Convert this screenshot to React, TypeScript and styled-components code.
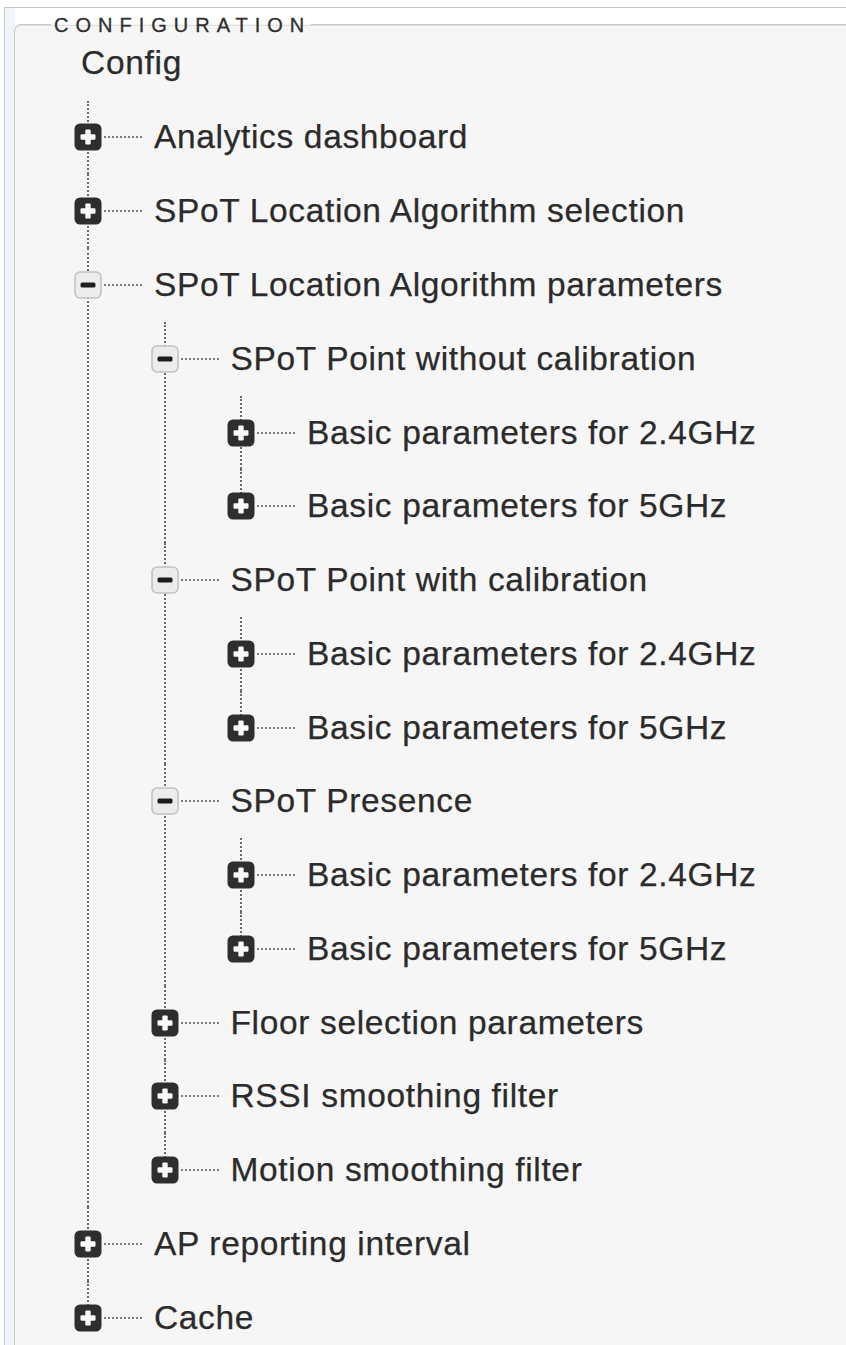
import React from "react";
import styled, { createGlobalStyle } from "styled-components";

const GlobalStyle = createGlobalStyle`
  html, body { margin: 0; padding: 0; background: #ffffff; }
  body { font-family: "Liberation Sans", Arial, sans-serif; overflow: hidden; }
`;

const ROW = 73.78;
const INDENT = 76.5;
const ICON = 28;

type Node = { label: string; children?: Node[] };

const basics = (): Node[] => [
  { label: "Basic parameters for 2.4GHz" },
  { label: "Basic parameters for 5GHz" },
];

const tree: Node[] = [
  { label: "Analytics dashboard" },
  { label: "SPoT Location Algorithm selection" },
  {
    label: "SPoT Location Algorithm parameters",
    children: [
      { label: "SPoT Point without calibration", children: basics() },
      { label: "SPoT Point with calibration", children: basics() },
      { label: "SPoT Presence", children: basics() },
      { label: "Floor selection parameters" },
      { label: "RSSI smoothing filter" },
      { label: "Motion smoothing filter" },
    ],
  },
  { label: "AP reporting interval" },
  { label: "Cache" },
];

const Frame = styled.div`
  margin: 7px 0 0 4px;
  border-top: 1px solid #c6c6c6;
  border-left: 1px solid #c6c6c6;
  padding: 7px 0 0 9px;
  background: linear-gradient(to right, #f1f5fb 0 10px, #ffffff 10px);
  min-height: 1400px;
`;

const Panel = styled.fieldset`
  margin: 0;
  padding: 0 0 40px 0;
  min-width: 0;
  border: 1px solid #c8c8c8;
  border-right: none;
  border-bottom: none;
  border-top-left-radius: 7px;
  background: #f6f6f6;
  box-shadow: inset 0 1px 0 #e0e0e0;
`;

const Legend = styled.legend`
  margin-left: 36px;
  padding: 1px 0 0 3px;
  font-family: "Liberation Sans", Arial, sans-serif;
  font-size: 20px;
  line-height: 18px;
  letter-spacing: 7px;
  color: #2e2e2e;
  -webkit-text-stroke: 0.3px #2e2e2e;
`;

const Title = styled.div`
  height: 52px;
  padding-top: 3px;
  display: flex;
  align-items: center;
  padding-left: 66px;
  font-size: 33.5px;
  letter-spacing: 0.7px;
  color: #2b2b2b;
  -webkit-text-stroke: 0.25px #2b2b2b;
`;

const List = styled.ul<{ $root?: boolean }>`
  list-style: none;
  margin: ${(p) => (p.$root ? "11.6px 0 0 59px" : `0 0 0 ${INDENT}px`)};
  padding: 0;
`;

const Item = styled.li<{ $last: boolean }>`
  position: relative;
  &::before {
    content: "";
    position: absolute;
    left: ${ICON / 2 - 1}px;
    top: 0;
    ${(p) => (p.$last ? `height: ${ROW / 2}px;` : "bottom: 0;")}
    border-left: 2px dotted #6a6a6a;
  }
`;

const Row = styled.div`
  position: relative;
  height: ${ROW}px;
  display: flex;
  align-items: center;
`;

const Toggle = styled.svg`
  position: relative;
  flex: none;
  width: ${ICON}px;
  height: ${ICON}px;
  display: block;
`;

const Connector = styled.span`
  flex: none;
  width: 38px;
  margin: 0 12px 0 2px;
  border-top: 2px dotted #7c7c7c;
`;

const Label = styled.span`
  font-size: 33.5px;
  letter-spacing: 0.65px;
  color: #2b2b2b;
  -webkit-text-stroke: 0.25px #2b2b2b;
  white-space: nowrap;
`;

const PlusIcon = () => (
  <Toggle viewBox="0 0 28 28">
    <rect x="0.5" y="0.5" width="27" height="27" rx="5.5" fill="#2e2e2e" />
    <rect x="6.5" y="11.3" width="15" height="5.4" rx="1.2" fill="#fafafa" />
    <rect x="11.3" y="6.5" width="5.4" height="15" rx="1.2" fill="#fafafa" />
  </Toggle>
);

const MinusIcon = () => (
  <Toggle viewBox="0 0 28 28">
    <rect x="1" y="1" width="26" height="26" rx="5" fill="#ececec" stroke="#c2c2c2" strokeWidth="1.6" />
    <rect x="6.5" y="11.5" width="15" height="5" rx="1.5" fill="#1c1c1c" />
  </Toggle>
);

const TreeNode = ({ node, last }: { node: Node; last: boolean }) => (
  <Item $last={last}>
    <Row>
      {node.children ? <MinusIcon /> : <PlusIcon />}
      <Connector />
      <Label>{node.label}</Label>
    </Row>
    {node.children && (
      <List>
        {node.children.map((c, i) => (
          <TreeNode key={i} node={c} last={i === node.children!.length - 1} />
        ))}
      </List>
    )}
  </Item>
);

export default function App() {
  return (
    <>
      <GlobalStyle />
      <Frame>
        <Panel>
          <Legend>CONFIGURATION</Legend>
          <Title>Config</Title>
          <List $root>
            {tree.map((n, i) => (
              <TreeNode key={i} node={n} last={i === tree.length - 1} />
            ))}
          </List>
        </Panel>
      </Frame>
    </>
  );
}
